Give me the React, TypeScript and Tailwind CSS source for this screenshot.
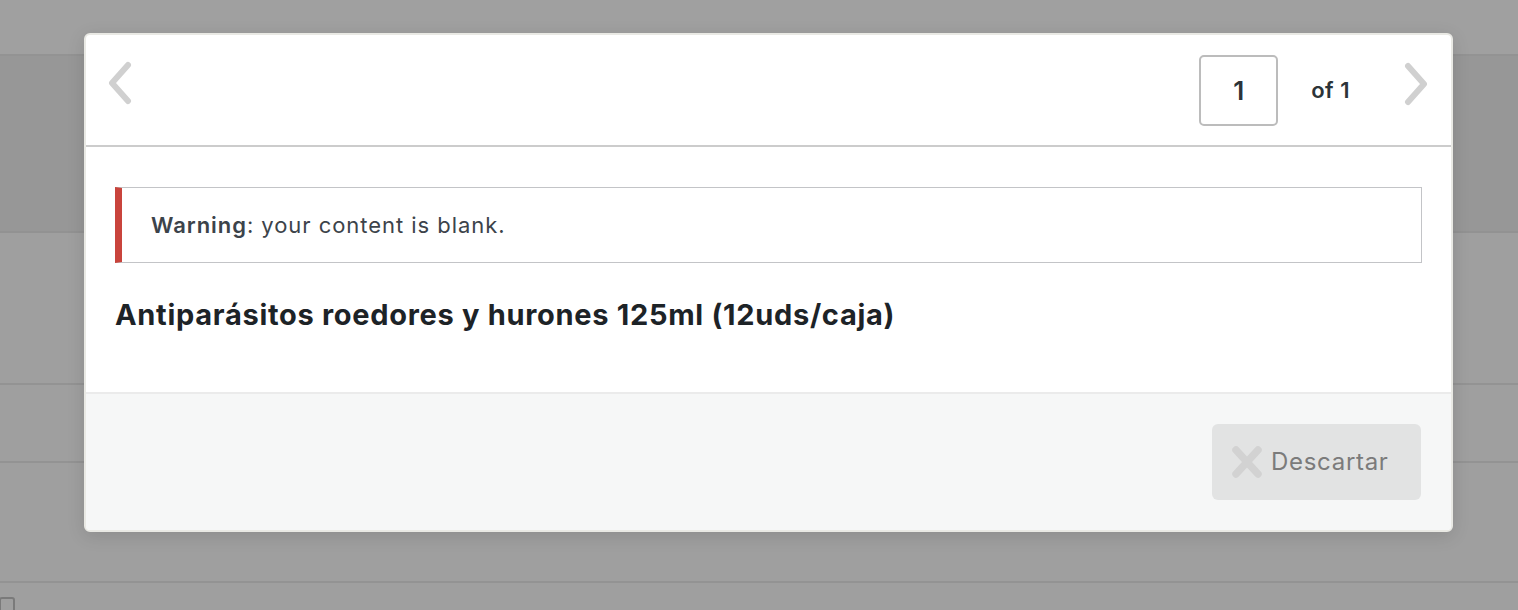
const font = { fontFamily: 'Inter, "Noto Sans", "Liberation Sans", sans-serif' }

function Chevron({ dir }: { dir: 'left' | 'right' }) {
    return (
        <svg width="28" height="44" viewBox="0 0 28 44" fill="none">
            <polyline
                points={dir === 'left' ? '22,4 6,22 22,40' : '6,4 22,22 6,40'}
                stroke="#d0d0d0"
                strokeWidth="6"
                strokeLinecap="round"
                strokeLinejoin="round"
            />
        </svg>
    )
}

function CloseMark() {
    return (
        <svg width="30" height="32" viewBox="0 0 30 32" fill="none">
            <path d="M4 4 L26 28 M26 4 L4 28" stroke="#d2d2d2" strokeWidth="7.5" strokeLinecap="round" />
        </svg>
    )
}

export default function App() {
    return (
        <div className="relative w-[1518px] h-[610px] overflow-hidden bg-[#9f9f9f]" style={font}>
            {/* page behind the overlay */}
            <div className="flex flex-col">
                <div className="h-[56px] bg-[#a0a0a0] border-b-2 border-[#939393]" />
                <div className="h-[177px] bg-[#979797] border-b-2 border-[#929292]" />
                <div className="h-[152px] border-b-2 border-[#939393]" />
                <div className="h-[78px] border-b-2 border-[#939393]" />
                <div className="h-[120px] border-b-2 border-[#939393]" />
                <div className="pt-[14px]">
                    <div className="w-[16px] h-[16px] -ml-[1px] rounded-[3px] border-2 border-[#7a7a7a]" />
                </div>
            </div>

            {/* modal */}
            <div className="absolute left-[84px] top-[33px] w-[1369px] h-[499px] rounded-[6px] border-2 border-[#e9e9e4] bg-white shadow-[0_4px_18px_rgba(0,0,0,0.12)] flex flex-col overflow-hidden">
                <div className="h-[112px] flex items-center pl-[20px] pr-[21px] border-b-2 border-[#cccccc]">
                    <div className="pb-[14px]">
                        <Chevron dir="left" />
                    </div>
                    <div className="flex-1" />
                    <div className="w-[79px] h-[71px] rounded-[5px] border-2 border-[#bcbcbc] flex items-center justify-center text-[26px] font-semibold text-[#2c3338]">
                        1
                    </div>
                    <span className="ml-[33px] mr-[52px] text-[22px] font-semibold tracking-[0.5px] text-[#2c3338]">of 1</span>
                    <div className="pb-[12px]">
                        <Chevron dir="right" />
                    </div>
                </div>

                <div className="flex-1 px-[29px] pt-[40px]">
                    <div className="h-[76px] border border-[#c3c4c7] border-l-[7px] border-l-[#c9443c] flex items-center pl-[29px] text-[22px] tracking-[0.95px] text-[#3c434a]">
                        <span>
                            <span className="font-semibold">Warning</span>: your content is blank.
                        </span>
                    </div>
                    <h1 className="mt-[30px] text-[29px] font-bold text-[#1d2327] tracking-[0.7px]">
                        Antiparásitos roedores y hurones 125ml (12uds/caja)
                    </h1>
                </div>

                <div className="h-[138px] bg-[#f6f7f7] border-t-2 border-[#ebebeb] flex items-center justify-end pr-[30px]">
                    <button className="w-[209px] h-[76px] rounded-[6px] bg-[#e2e3e3] flex items-center pl-[20px] gap-[9px] text-[24px] tracking-[0.7px] text-[#7b7b7b]">
                        <CloseMark />
                        <span>Descartar</span>
                    </button>
                </div>
            </div>
        </div>
    )
}
